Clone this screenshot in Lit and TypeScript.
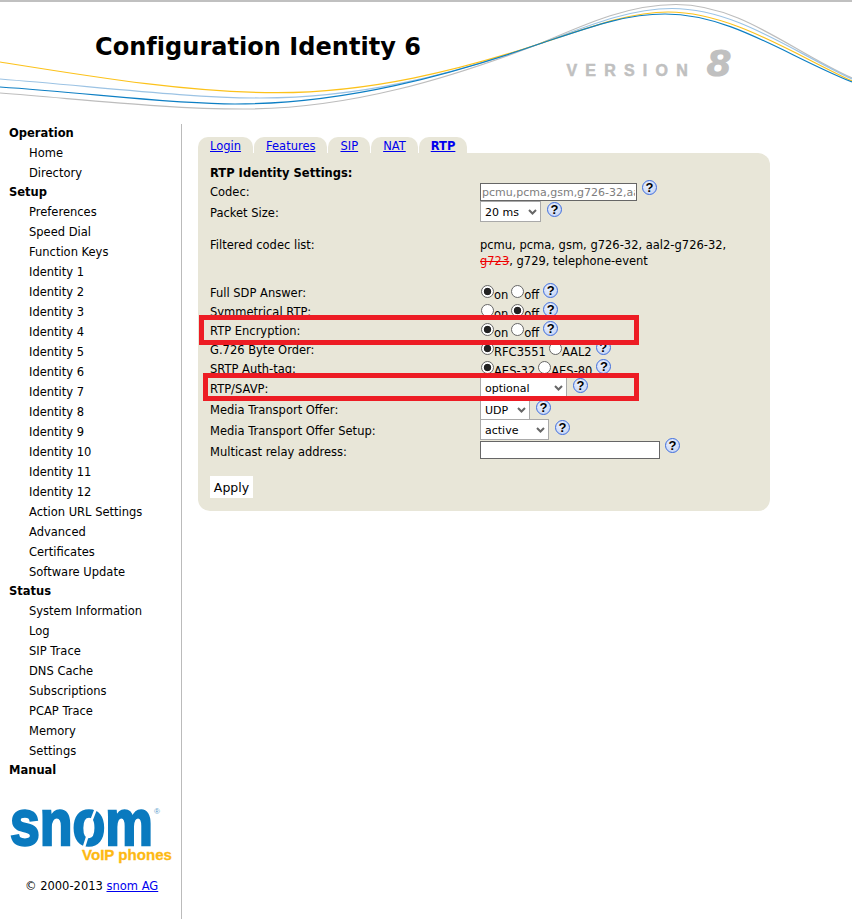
import { LitElement, html, css } from "lit";
import { customElement } from "lit/decorators.js";

type Row =
  | { h: number; label: string; kind: "input"; value: string; width: number }
  | { h: number; label: string; kind: "select"; value: string; width: number }
  | { h: number; label: string; kind: "radio"; options: string[]; checked: number };

const ROWS_TOP: Row[] = [
  { h: 19, label: "Codec:", kind: "input", value: "pcmu,pcma,gsm,g726-32,aal2-g726-32,g723,g729,telephone-event", width: 157 },
  { h: 21, label: "Packet Size:", kind: "select", value: "20 ms", width: 61 },
];
const ROWS_BOTTOM: Row[] = [
  { h: 19, label: "Full SDP Answer:", kind: "radio", options: ["on", "off"], checked: 0 },
  { h: 19, label: "Symmetrical RTP:", kind: "radio", options: ["on", "off"], checked: 1 },
  { h: 19, label: "RTP Encryption:", kind: "radio", options: ["on", "off"], checked: 0 },
  { h: 19, label: "G.726 Byte Order:", kind: "radio", options: ["RFC3551", "AAL2"], checked: 0 },
  { h: 19, label: "SRTP Auth-tag:", kind: "radio", options: ["AES-32", "AES-80"], checked: 0 },
  { h: 22, label: "RTP/SAVP:", kind: "select", value: "optional", width: 87 },
  { h: 20, label: "Media Transport Offer:", kind: "select", value: "UDP", width: 50 },
  { h: 21, label: "Media Transport Offer Setup:", kind: "select", value: "active", width: 69 },
  { h: 21, label: "Multicast relay address:", kind: "input", value: "", width: 180 },
];

const NAV: { head: string; items: string[] }[] = [
  { head: "Operation", items: ["Home", "Directory"] },
  {
    head: "Setup",
    items: [
      "Preferences", "Speed Dial", "Function Keys",
      "Identity 1", "Identity 2", "Identity 3", "Identity 4", "Identity 5", "Identity 6",
      "Identity 7", "Identity 8", "Identity 9", "Identity 10", "Identity 11", "Identity 12",
      "Action URL Settings", "Advanced", "Certificates", "Software Update",
    ],
  },
  {
    head: "Status",
    items: ["System Information", "Log", "SIP Trace", "DNS Cache", "Subscriptions", "PCAP Trace", "Memory", "Settings"],
  },
  { head: "Manual", items: [] },
];

const TABS = ["Login", "Features", "SIP", "NAT", "RTP"];

@customElement("app-root")
export class AppRoot extends LitElement {
  static styles = css`
    :host {
      display: block;
      min-height: 919px;
      box-sizing: border-box;
      font-family: "DejaVu Sans", Verdana, sans-serif;
      font-size: 11.5px;
      color: #000;
      background: #fff;
    }
    .header {
      position: relative;
      height: 122px;
      border-top: 2px solid #c0c0c0;
      overflow: hidden;
    }
    .art {
      position: absolute;
      left: 0;
      top: -2px;
    }
    .art text {
      font-family: "Liberation Sans", Arial, sans-serif;
      font-weight: 700;
      fill: #c0c0c0;
      stroke: #c0c0c0;
    }
    h1 {
      position: relative;
      margin: 0;
      padding: 29px 0 0 95px;
      font-size: 24px;
      line-height: 32px;
      font-weight: 700;
      letter-spacing: 0.04px;
    }
    .main {
      display: flex;
      min-height: 795px;
    }
    .side {
      width: 181px;
      flex: none;
      border-right: 1px solid #bbb;
    }
    nav {
      margin-top: -1px;
    }
    .nh {
      height: 20px;
      line-height: 20px;
      padding-left: 9px;
      font-weight: 700;
      margin-top: -1px;
    }
    .nh.first {
      margin-top: 0;
    }
    .ni {
      height: 20px;
      line-height: 20px;
      padding-left: 29px;
    }
    .logo {
      display: block;
      margin-top: 20px;
    }
    .copy {
      margin-top: 8px;
      padding-left: 25px;
      line-height: 16px;
    }
    a {
      color: #0000ee;
      text-decoration: underline;
    }
    .content {
      position: relative;
      flex: 1;
      padding: 13px 0 0 16px;
    }
    .tabs {
      display: flex;
      gap: 1px;
      height: 16px;
    }
    .tab {
      background: #e8e6d8;
      border-radius: 10px 10px 0 0;
      padding: 0 12px;
      line-height: 19px;
    }
    .tab.on a {
      font-weight: 700;
    }
    .panel {
      width: 572px;
      height: 358px;
      box-sizing: border-box;
      background: #e8e6d8;
      border-radius: 0 12px 12px 12px;
      padding: 11px 0 0 12px;
    }
    .title {
      height: 18px;
      line-height: 19px;
      font-weight: 700;
    }
    .row {
      display: grid;
      grid-template-columns: 270px 1fr;
    }
    .lab {
      align-self: center;
      line-height: 16px;
      padding-top: 1px;
      white-space: nowrap;
    }
    .r21 .lab,
    .r22 .lab {
      padding-top: 2px;
    }
    .val {
      display: flex;
      align-items: flex-start;
      height: 100%;
    }
    .r19 { height: 19px; }
    .r20 { height: 20px; }
    .r21 { height: 21px; }
    .r22 { height: 22px; }
    .txt {
      box-sizing: border-box;
      margin-top: 1px;
      height: 18px;
      border: 1px solid #666;
      background: #fff;
      padding: 0 1px;
      font: 11px "DejaVu Sans", Verdana, sans-serif;
      color: #7d7d7d;
      outline: none;
    }
    select {
      appearance: none;
      -webkit-appearance: none;
      box-sizing: border-box;
      height: 21px;
      border: 1px solid #a9a9a9;
      border-radius: 0;
      background-color: #fff;
      background-image: url("data:image/svg+xml,%3Csvg xmlns='http://www.w3.org/2000/svg' width='9' height='6'%3E%3Cpath d='M1 1l3.5 3.5L8 1' fill='none' stroke='%23666' stroke-width='2'/%3E%3C/svg%3E");
      background-repeat: no-repeat;
      background-position: right 3px center;
      padding: 1px 0 0 4px;
      font: 11px "DejaVu Sans", Verdana, sans-serif;
      color: #000;
      outline: none;
    }
    .help {
      display: block;
      flex: none;
      box-sizing: border-box;
      width: 15px;
      height: 15px;
      border-radius: 50%;
      border: 1px solid #3f6ee0;
      background: radial-gradient(circle at 40% 35%, #eef3fd, #bccdf2);
      text-align: center;
      font: 700 13px/13px "Liberation Sans", Arial, sans-serif;
      color: #000;
    }
    .help.h-input { margin: -2px 0 0 5px; }
    .help.h-select { margin: 1px 0 0 6px; }
    .help.h-radio { margin: 1px 0 0 4px; }
    .radio {
      appearance: none;
      -webkit-appearance: none;
      flex: none;
      box-sizing: border-box;
      width: 13px;
      height: 13px;
      margin: 3px 0 0 1px;
      border: 1px solid #666;
      border-radius: 50%;
      background: #fff;
    }
    .radio:checked {
      background: radial-gradient(circle, #222 0, #222 3.4px, #fff 4.1px);
    }
    .rt {
      padding-top: 6px;
      line-height: 15px;
      white-space: nowrap;
    }
    .radio.second {
      margin-left: 3px;
    }
    .filtered {
      height: 60px;
      padding-top: 15px;
      box-sizing: border-box;
    }
    .filtered .val {
      display: block;
      line-height: 16px;
    }
    .filtered .lab {
      align-self: start;
      padding-top: 0;
    }
    .strike {
      color: #ee0000;
      text-decoration: line-through;
    }
    .apply {
      display: block;
      margin-top: 15px;
      width: 43px;
      height: 22px;
      padding: 0;
      border: none;
      background: #fff;
      font: 12.5px "DejaVu Sans", Verdana, sans-serif;
      color: #000;
    }
    .mark {
      position: absolute;
      box-sizing: border-box;
      border: 5px solid #ed1c24;
      pointer-events: none;
    }
    .m1 { left: 17px; top: 191px; width: 440px; height: 30px; }
    .m2 { left: 21px; top: 249px; width: 436px; height: 28px; }
  `;

  private renderVal(r: Row) {
    if (r.kind === "input") {
      return html`<input class="txt" style="width:${r.width}px" .value=${r.value} />
        <span class="help h-input">?</span>`;
    }
    if (r.kind === "select") {
      return html`<select style="width:${r.width}px"><option>${r.value}</option></select>
        <span class="help h-select">?</span>`;
    }
    return html`${r.options.map(
      (o, i) => html`<input
          type="radio"
          class="radio ${i ? "second" : ""}"
          name=${r.label}
          ?checked=${i === r.checked}
        /><span class="rt">${o}</span>`
    )}<span class="help h-radio">?</span>`;
  }

  private renderRow(r: Row) {
    return html`<div class="row r${r.h}">
      <div class="lab">${r.label}</div>
      <div class="val">${this.renderVal(r)}</div>
    </div>`;
  }

  render() {
    return html`
      <div class="header">
        <svg class="art" width="852" height="124" viewBox="0 0 852 124" fill="none">
          <path d="M0 93C90 100 170 109 243 109C350 109 450 78 539 44C590 22 630 4.5 676 4.5C740 4.5 790 50 852 78" stroke="#bdbdbd" stroke-width="1.2" />
          <path d="M0 79C100 87 190 98 260 98C360 98 450 75 539 44C590 25 630 8.5 672 8.5C735 8.5 790 50 852 79" stroke="#9cc3e4" stroke-width="1.2" />
          <path d="M0 62C100 78 190 92.7 277 92.7C370 92.7 460 70 539 44C590 27 630 12 668 12C730 12 790 52 852 81" stroke="#fcc21b" stroke-width="1.2" />
          <path d="M0 87C90 93 170 104 235 104C345 104 450 75 539 44C590 27 625 14 665 14C730 14 785 55 852 82" stroke="#0d7fc4" stroke-width="1.2" />
          <text x="566.5" y="76" font-size="16" stroke-width="0.5" letter-spacing="8.2">VERSION</text>
          <text x="707" y="76" font-size="37" stroke-width="1.2" font-style="italic" textLength="23" lengthAdjust="spacingAndGlyphs">8</text>
        </svg>
        <h1>Configuration Identity 6</h1>
      </div>
      <div class="main">
        <div class="side">
          <nav>
            ${NAV.map(
              (g, i) => html`<div class="nh ${i === 0 ? "first" : ""}">${g.head}</div>
                ${g.items.map((t) => html`<div class="ni">${t}</div>`)}`
            )}
          </nav>
          <svg class="logo" width="181" height="70" viewBox="0 0 181 70">
            <text x="10" y="45" font-family="Liberation Sans, Arial, sans-serif" font-weight="700" font-size="64"
              fill="#0a7abf" stroke="#0a7abf" stroke-width="2.4" textLength="143" lengthAdjust="spacingAndGlyphs">snom</text>
            <path d="M97 6L90 24M90 28L84 47" stroke="#fff" stroke-width="2.6" />
            <text x="154" y="14" font-family="Liberation Sans, Arial, sans-serif" font-size="8" fill="#5b9bcb">®</text>
            <text x="82" y="60" font-family="Liberation Sans, Arial, sans-serif" font-weight="700" font-size="15"
              fill="#fdb913" stroke="#fdb913" stroke-width="0.3" textLength="90" lengthAdjust="spacingAndGlyphs">VoIP phones</text>
          </svg>
          <div class="copy">© 2000-2013 <a href="#">snom AG</a></div>
        </div>
        <div class="content">
          <div class="tabs">
            ${TABS.map((t) => html`<div class="tab ${t === "RTP" ? "on" : ""}"><a href="#">${t}</a></div>`)}
          </div>
          <div class="panel">
            <div class="title">RTP Identity Settings:</div>
            ${ROWS_TOP.map((r) => this.renderRow(r))}
            <div class="row filtered">
              <div class="lab">Filtered codec list:</div>
              <div class="val">
                pcmu, pcma, gsm, g726-32, aal2-g726-32,<br /><span class="strike">g723</span>, g729, telephone-event
              </div>
            </div>
            ${ROWS_BOTTOM.map((r) => this.renderRow(r))}
            <button class="apply">Apply</button>
          </div>
          <div class="mark m1"></div>
          <div class="mark m2"></div>
        </div>
      </div>
    `;
  }
}
